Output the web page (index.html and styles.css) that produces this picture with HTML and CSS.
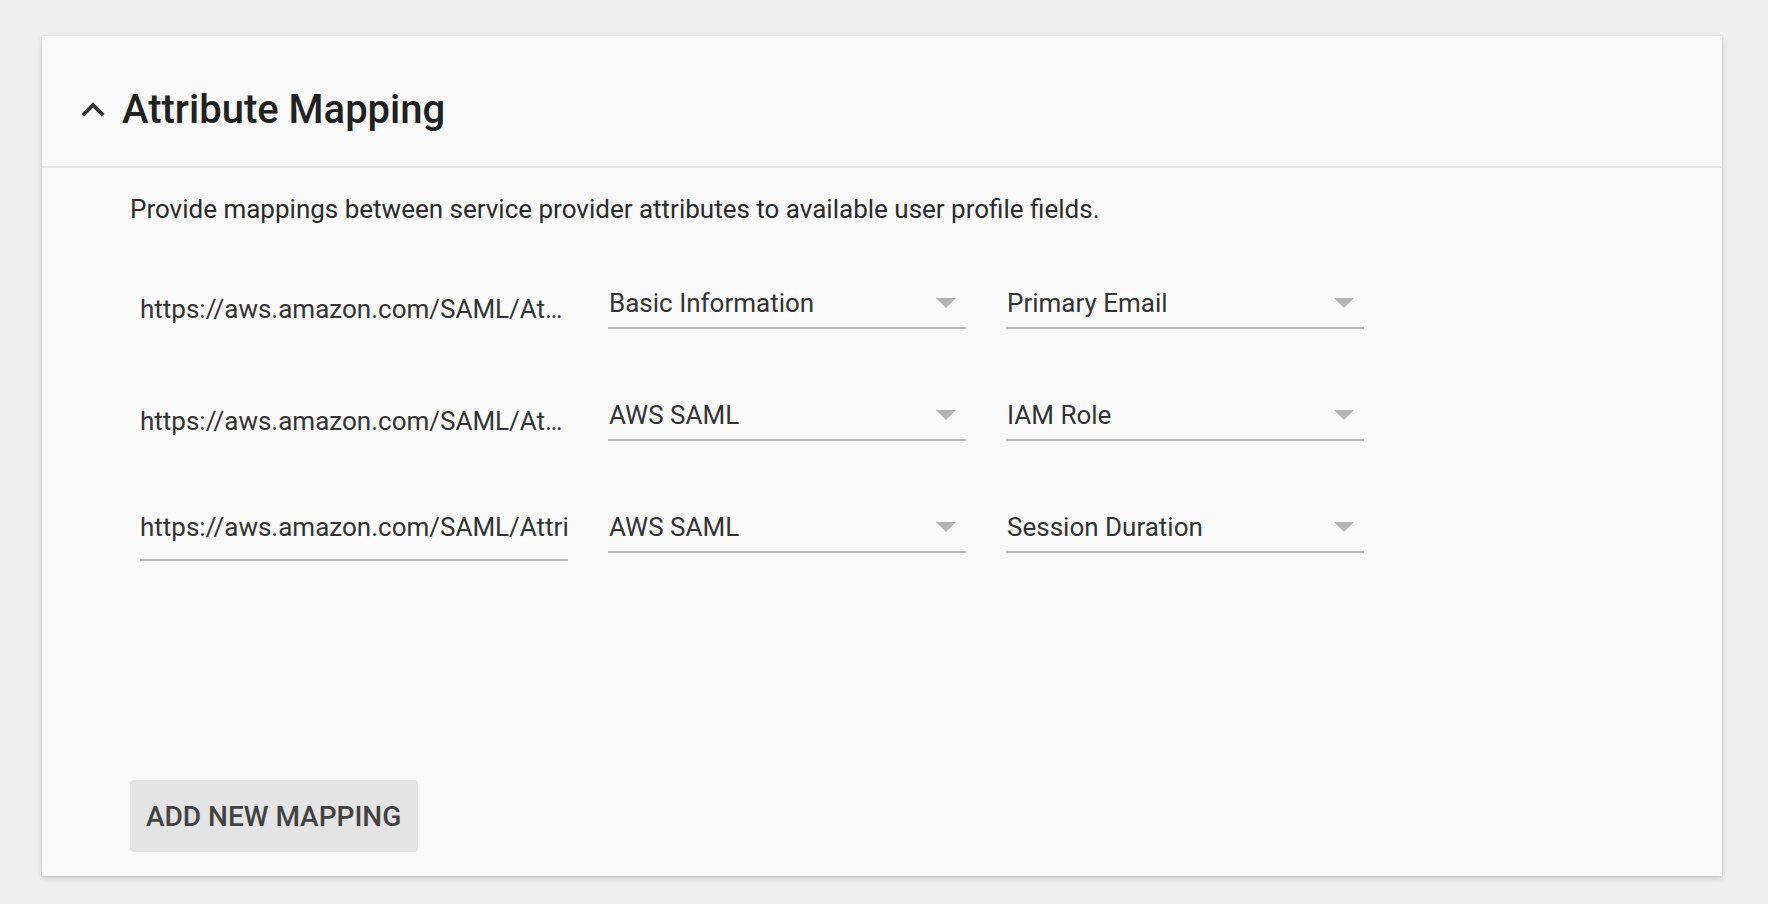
FILE: index.html
```html
<!DOCTYPE html>
<html lang="en">
<head>
<meta charset="utf-8">
<title>Attribute Mapping</title>
<link rel="stylesheet" href="styles.css">
</head>
<body>
<div class="page">
  <section class="card">
    <header class="card-header">
      <svg class="chevron" viewBox="0 0 24 24" aria-hidden="true"><path d="M12 8l-6 6 1.41 1.41L12 10.83l4.59 4.58L18 14z"/></svg>
      <h2 class="title">Attribute Mapping</h2>
    </header>
    <div class="card-body">
      <p class="desc">Provide mappings between service provider attributes to available user profile fields.</p>
      <div class="rows">
        <div class="row">
          <div class="attr">https://aws.amazon.com/SAML/Attributes/RoleSessionName</div>
          <div class="select"><span class="sel-text">Basic Information</span><span class="arrow"></span></div>
          <div class="select"><span class="sel-text">Primary Email</span><span class="arrow"></span></div>
        </div>
        <div class="row">
          <div class="attr">https://aws.amazon.com/SAML/Attributes/Role</div>
          <div class="select"><span class="sel-text">AWS SAML</span><span class="arrow"></span></div>
          <div class="select"><span class="sel-text">IAM Role</span><span class="arrow"></span></div>
        </div>
        <div class="row">
          <div class="attr-input">https://aws.amazon.com/SAML/Attributes/SessionDuration</div>
          <div class="select"><span class="sel-text">AWS SAML</span><span class="arrow"></span></div>
          <div class="select"><span class="sel-text">Session Duration</span><span class="arrow"></span></div>
        </div>
      </div>
      <button class="add-btn" type="button">ADD NEW MAPPING</button>
    </div>
  </section>
</div>
</body>
</html>
```

FILE: styles.css
```css
* { box-sizing: border-box; }
html, body { margin: 0; padding: 0; }
body {
  background: #efefef;
  font-family: Roboto, "Liberation Sans", Arial, sans-serif;
  color: #333333;
}
.page {
  width: 1768px;
  height: 904px;
  padding: 36px 46px 0 42px;
}
.card {
  height: 840px;
  background: #fafafa;
  box-shadow: 0 2px 6px rgba(0,0,0,0.16), 0 1px 2px rgba(0,0,0,0.08);
  display: flex;
  flex-direction: column;
}
.card-header {
  height: 132px;
  border-bottom: 2px solid #e6e6e6;
  display: flex;
  align-items: center;
  padding-left: 28px;
  padding-top: 18px;
}
.chevron {
  width: 46px;
  height: 46px;
  fill: #333333;
  flex: none;
}
.title {
  margin: 0 0 0 6px;
  font-size: 40px;
  font-weight: 500;
  color: #212121;
  line-height: 48px;
}
.card-body {
  flex: 1;
  display: flex;
  flex-direction: column;
  padding: 23px 24px 24px 88px;
}
.desc {
  margin: 0;
  font-size: 26px;
  line-height: 36px;
  color: #2b2b2b;
}
.rows {
  margin-top: 58px;
  margin-left: 10px;
  display: flex;
  flex-direction: column;
  gap: 68px;
}
.row {
  display: flex;
  align-items: flex-start;
  gap: 40px;
}
.attr, .attr-input {
  width: 428px;
  font-size: 26px;
  line-height: 36px;
  white-space: nowrap;
  overflow: hidden;
  color: #333333;
}
.attr {
  padding-top: 6px;
  text-overflow: ellipsis;
}
.attr-input {
  text-overflow: clip;
  padding-bottom: 14px;
  border-bottom: 2px solid #bdbdbd;
}
.select {
  width: 358px;
  display: flex;
  align-items: flex-start;
  justify-content: space-between;
  padding: 0 10px 6px 1px;
  border-bottom: 2px solid #bdbdbd;
  font-size: 26px;
  line-height: 36px;
  color: #333333;
}
.arrow {
  width: 0;
  height: 0;
  margin-top: 13px;
  border-left: 10px solid transparent;
  border-right: 10px solid transparent;
  border-top: 10px solid #b4b4b4;
}
.add-btn {
  margin-top: auto;
  align-self: flex-start;
  height: 72px;
  width: 288px;
  padding: 0 16px;
  border: none;
  border-radius: 4px;
  background: #e4e4e4;
  color: #424242;
  font-family: Roboto, "Liberation Sans", Arial, sans-serif;
  font-size: 28px;
  font-weight: 500;
  text-align: left;
}
```
